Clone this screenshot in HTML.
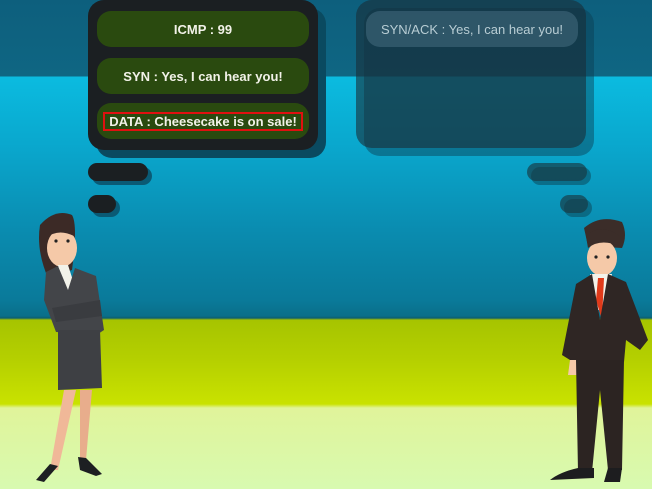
<!DOCTYPE html>
<html><head><meta charset="utf-8"><style>
*{margin:0;padding:0;box-sizing:border-box}
body{width:652px;height:489px;overflow:hidden;position:relative;font-family:"Liberation Sans",sans-serif;
background:linear-gradient(to bottom,#0d5f7d 0,#0f6683 76px,#0bbbe0 77px,#0aa6cc 150px,#0a8cb0 230px,#0a7a9a 300px,#0a6f8a 316px,#0c5f70 318px,#a6c400 320px,#b5d000 360px,#c9e200 404px,#e0f49a 408px,#d8fab0 489px)}
.b{position:absolute;border-radius:16px}
.p{position:absolute;border-radius:14px;color:#f2f2e8;font-size:13px;font-weight:bold;display:flex;align-items:center;justify-content:center;white-space:nowrap}
</style></head><body>
<div class="b" style="left:96px;top:8px;width:230px;height:150px;background:#0a4a60"></div>
<div class="b" style="left:88px;top:0;width:230px;height:150px;background:#1b1f22"></div>
<div class="p" style="left:97px;top:11px;width:212px;height:36px;background:#2a4a0f">ICMP : 99</div>
<div class="p" style="left:97px;top:58px;width:212px;height:36px;background:#2a4a0f">SYN : Yes, I can hear you!</div>
<div class="p" style="left:97px;top:103px;width:212px;height:36px;background:#2a4a0f"><span style="border:2px solid #e01010;padding:0 4px;line-height:15px">DATA : Cheesecake is on sale!</span></div>
<div class="b" style="left:92px;top:167px;width:60px;height:18px;border-radius:9px;background:#0a5a75"></div>
<div class="b" style="left:88px;top:163px;width:60px;height:18px;border-radius:9px;background:#1b1f22"></div>
<div class="b" style="left:92px;top:199px;width:28px;height:18px;border-radius:9px;background:#0a5a75"></div>
<div class="b" style="left:88px;top:195px;width:28px;height:18px;border-radius:9px;background:#1b1f22"></div>
<div class="b" style="left:364px;top:8px;width:230px;height:148px;background:rgba(10,60,80,0.45)"></div>
<div class="b" style="left:356px;top:0;width:230px;height:148px;background:rgba(25,45,55,0.6)"></div>
<div class="p" style="left:366px;top:11px;width:212px;height:36px;background:rgba(80,120,140,0.45);color:#b8cdd4;font-weight:normal">SYN/ACK : Yes, I can hear you!</div>
<div class="b" style="left:531px;top:167px;width:60px;height:18px;border-radius:9px;background:rgba(10,80,100,0.6)"></div>
<div class="b" style="left:527px;top:163px;width:60px;height:18px;border-radius:9px;background:rgba(25,55,65,0.65)"></div>
<div class="b" style="left:564px;top:199px;width:28px;height:18px;border-radius:9px;background:rgba(10,80,100,0.6)"></div>
<div class="b" style="left:560px;top:195px;width:28px;height:18px;border-radius:9px;background:rgba(25,55,65,0.65)"></div>
<svg style="position:absolute;left:0;top:0" width="652" height="489">
<path d="M40 225 Q55 208 72 215 Q78 225 72 270 L48 278 Q36 250 40 225Z" fill="#3c2a26"/>
<ellipse cx="62" cy="248" rx="15" ry="19" fill="#f5c9a8"/>
<path d="M44 228 Q60 215 74 228 L74 236 Q58 228 46 238Z" fill="#3c2a26"/>
<circle cx="56" cy="241" r="1.6" fill="#222"/><circle cx="68" cy="241" r="1.6" fill="#222"/>
<path d="M58 265 L68 265 L76 290 L62 290Z" fill="#f2f2ea"/>
<path d="M46 272 L58 266 L68 290 L75 268 L96 276 L104 330 L98 334 L56 332 L44 300Z" fill="#434549"/>
<path d="M52 308 L100 300 L102 316 L56 322Z" fill="#3a3c40"/>
<path d="M58 330 L100 330 L102 388 L58 390Z" fill="#3e4044"/>
<path d="M64 390 L76 390 L58 470 L50 470Z" fill="#f0b898"/>
<path d="M80 390 L92 390 L86 460 L80 460Z" fill="#e8ad8c"/>
<path d="M50 464 L58 466 L44 482 L36 480Z" fill="#1d1f22"/>
<path d="M78 457 L86 458 L102 474 L96 476 L80 470Z" fill="#1d1f22"/>
<path d="M584 228 Q600 214 622 222 Q628 235 622 248 L588 246Z" fill="#3b2d29"/>
<ellipse cx="602" cy="258" rx="15" ry="18" fill="#f5c9a8"/>
<path d="M586 236 Q600 222 620 236 L620 246 Q600 238 588 248Z" fill="#3b2d29"/>
<circle cx="596" cy="257" r="1.6" fill="#222"/><circle cx="608" cy="257" r="1.6" fill="#222"/>
<path d="M590 274 L612 274 L606 310 L596 310Z" fill="#f2f2ea"/>
<path d="M598 278 L604 278 L602 320 L596 300Z" fill="#e03a1a"/>
<path d="M576 284 L592 274 L600 320 L608 274 L626 282 L648 340 L640 350 L626 340 L624 362 L576 360 L570 360 L562 355Z" fill="#2f2624"/>
<path d="M570 360 L578 360 L578 375 L568 375Z" fill="#f5c9a8"/>
<path d="M576 360 L624 360 L622 470 L608 470 L600 390 L592 472 L578 472Z" fill="#2c2422"/>
<path d="M578 468 L594 468 L594 478 L550 480 Q560 472 578 468Z" fill="#1d1d1f"/>
<path d="M608 468 L622 468 L620 482 L604 482Z" fill="#1d1d1f"/>
</svg>
</body></html>
